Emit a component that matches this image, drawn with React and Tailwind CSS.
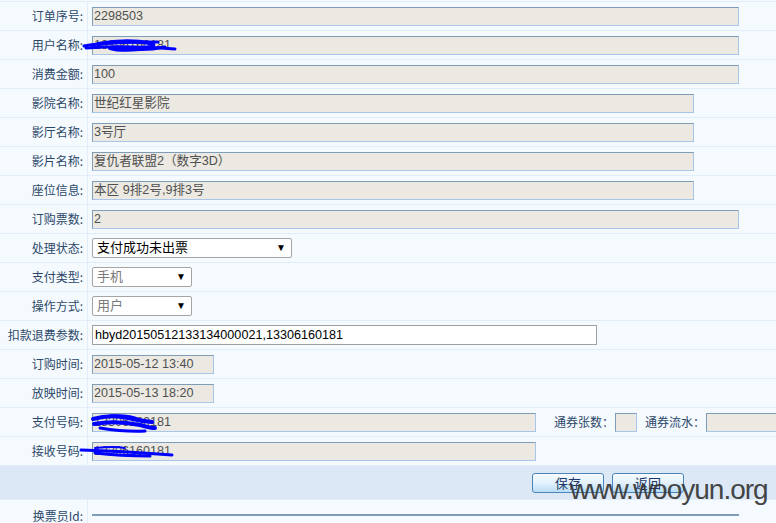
import React from "react";

const FONT_IN = { fontFamily: '"Liberation Sans", "Noto Sans CJK SC", sans-serif' };
const FONT_LB = { fontFamily: '"Noto Sans CJK SC", "Liberation Sans", sans-serif' };

function Row({ label, children }) {
  return (
    <div className="flex h-[29px] border-b border-[#e1edf8]">
      <div
        className="w-[88px] shrink-0 border-r border-[#e1edf8] flex items-center justify-end pr-[4px] text-[12px] text-[#2c4868] whitespace-nowrap"
        style={FONT_LB}
      >
        {label}
      </div>
      <div className="flex-1 flex items-center pl-[4px]">{children}</div>
    </div>
  );
}

function RO({ w, children }) {
  return (
    <div
      className={`${w} h-[19px] bg-[#ebe9e2] border border-t-[#7f9db9] border-l-[#7f9db9] border-b-[#a9c6e8] border-r-[#a9c6e8] pl-[1px] text-[12.6px] leading-[17px] text-[#505050] whitespace-nowrap overflow-hidden`}
      style={FONT_IN}
    >
      {children}
    </div>
  );
}

function Sel({ w, children, dim }) {
  return (
    <div
      className={`${w} h-[20px] bg-white border border-[#a5a5a5] rounded-[2px] flex items-center justify-between pl-[4px] pr-[5px] text-[13px] ${dim ? "text-[#7a7a7a]" : "text-black"}`}
      style={FONT_IN}
    >
      <span>{children}</span>
      <span className="text-[10px] text-black leading-none">▼</span>
    </div>
  );
}

function Btn({ children }) {
  return (
    <div
      className="w-[72px] h-[20px] rounded-[3px] border border-[#4a86ba] bg-gradient-to-b from-[#f7fbff] via-[#e3f1fc] to-[#b9ddf6] flex items-center justify-center text-[13px] text-[#1c3768]"
      style={FONT_LB}
    >
      {children}
    </div>
  );
}

export default function App() {
  return (
    <div className="relative w-[776px] h-[523px] overflow-hidden bg-[#f5faff]">
      <div className="w-[1216px]">
        <div className="h-[2px] border-b border-[#e1edf8]" />
        <Row label="订单序号:"><RO w="w-[647px]">2298503</RO></Row>
        <Row label="用户名称:"><RO w="w-[647px]">13306160181</RO></Row>
        <Row label="消费金额:"><RO w="w-[647px]">100</RO></Row>
        <Row label="影院名称:"><RO w="w-[602px]">世纪红星影院</RO></Row>
        <Row label="影厅名称:"><RO w="w-[602px]">3号厅</RO></Row>
        <Row label="影片名称:"><RO w="w-[602px]">复仇者联盟2（数字3D）</RO></Row>
        <Row label="座位信息:"><RO w="w-[602px]">本区 9排2号,9排3号</RO></Row>
        <Row label="订购票数:"><RO w="w-[647px]">2</RO></Row>
        <Row label="处理状态:"><Sel w="w-[200px]">支付成功未出票</Sel></Row>
        <Row label="支付类型:"><Sel w="w-[100px]" dim>手机</Sel></Row>
        <Row label="操作方式:"><Sel w="w-[100px]" dim>用户</Sel></Row>
        <Row label="扣款退费参数:">
          <div
            className="w-[505px] h-[20px] bg-white border border-[#a0a0a0] pl-[2px] text-[12.6px] leading-[18px] text-black"
            style={FONT_IN}
          >
            hbyd20150512133134000021,13306160181
          </div>
        </Row>
        <Row label="订购时间:"><RO w="w-[122px]">2015-05-12 13:40</RO></Row>
        <Row label="放映时间:"><RO w="w-[122px]">2015-05-13 18:20</RO></Row>
        <Row label="支付号码:">
          <RO w="w-[444px]">13306160181</RO>
          <span className="ml-[18px] text-[12px] text-[#2c4868]" style={FONT_LB}>通券张数：</span>
          <div className="ml-[1px]"><RO w="w-[22px]"></RO></div>
          <span className="ml-[8px] text-[12px] text-[#2c4868]" style={FONT_LB}>通券流水：</span>
          <div className="ml-[1px]"><RO w="w-[200px]"></RO></div>
        </Row>
        <Row label="接收号码:"><RO w="w-[444px]">13306160181</RO></Row>
        <div className="h-[34px] bg-[#dce8f5] border-b border-[#e1edf8] flex items-center justify-center gap-[8px]">
          <Btn>保存</Btn>
          <Btn>返回</Btn>
        </div>
        <div className="flex h-[60px]">
          <div
            className="w-[88px] shrink-0 border-r border-[#e1edf8] flex justify-end pr-[4px] pt-[7px] text-[12px] text-[#2c4868]"
            style={FONT_LB}
          >
            换票员Id:
          </div>
          <div className="flex-1 pl-[4px] pt-[14px]">
            <div className="w-[647px] h-[40px] bg-[#f5faff] border-t-2 border-[#7f9db9]" />
          </div>
        </div>
      </div>

      <svg className="absolute left-0 top-0 pointer-events-none" width="776" height="523">
        <g stroke="#0000ff" fill="none" strokeLinecap="round" strokeLinejoin="round">
          <path d="M84,46 C100,43 130,42 158,42" strokeWidth="3" />
          <path d="M86,48 Q125,45 175,49" strokeWidth="3" />
          <path d="M98,44 Q125,39 150,43 Q160,46 140,49 Q120,51 110,48" strokeWidth="4" />
          <path d="M118,47 Q140,52 165,47" strokeWidth="3" />
          <path d="M93,419 Q110,414 128,418 Q140,421 152,422" strokeWidth="4" />
          <path d="M94,424 Q115,420 140,425 Q150,428 155,428" strokeWidth="4" />
          <path d="M100,428 Q125,432 145,431" strokeWidth="3" />
          <path d="M110,416 Q130,415 140,420" strokeWidth="3" />
          <path d="M81,450 Q120,451 172,455" strokeWidth="3" />
          <path d="M95,453 Q120,456 150,456" strokeWidth="3" />
          <path d="M95,448 Q115,446 125,448" strokeWidth="2" />
        </g>
      </svg>

      <div
        className="absolute left-[570px] top-[476px] text-[28px] tracking-[-1px] leading-none text-[#333333] opacity-90 pointer-events-none whitespace-nowrap"
        style={{ fontFamily: '"Liberation Sans", Arial, sans-serif' }}
      >
        www.wooyun.org
      </div>
    </div>
  );
}
